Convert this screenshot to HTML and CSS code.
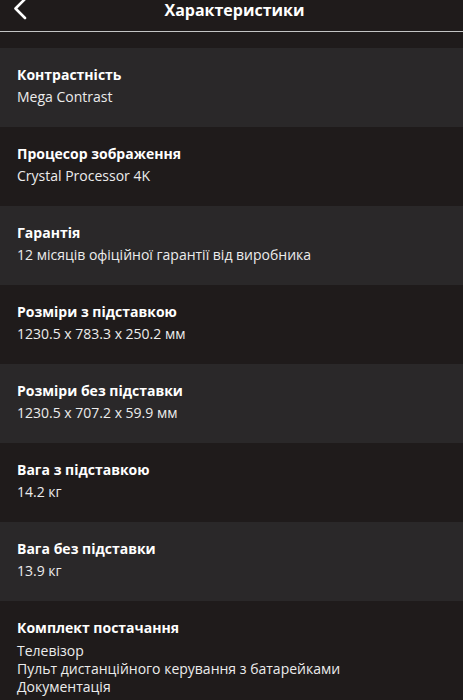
FILE: index.html
```html
<!DOCTYPE html>
<html lang="uk">
<head>
<meta charset="utf-8">
<title>Характеристики</title>
<link rel="stylesheet" href="styles.css">
</head>
<body>
<header class="topbar">
  <span class="back">
    <svg width="14" height="22" viewBox="0 0 14 22"><path d="M12 1 L2.5 10.5 L12 20" fill="none" stroke="#fff" stroke-width="2.6" stroke-linecap="round" stroke-linejoin="round"/></svg>
  </span>
  <h1 class="title">Характеристики</h1>
</header>
<div class="spacer"></div>
<main class="specs">
  <div class="row light"><div class="name">Контрастність</div><div class="value">Mega Contrast</div></div>
  <div class="row dark"><div class="name">Процесор зображення</div><div class="value">Crystal Processor 4K</div></div>
  <div class="row light"><div class="name">Гарантія</div><div class="value">12 місяців офіційної гарантії від виробника</div></div>
  <div class="row dark"><div class="name">Розміри з підставкою</div><div class="value">1230.5 x 783.3 x 250.2 мм</div></div>
  <div class="row light"><div class="name">Розміри без підставки</div><div class="value">1230.5 x 707.2 x 59.9 мм</div></div>
  <div class="row dark"><div class="name">Вага з підставкою</div><div class="value">14.2 кг</div></div>
  <div class="row light"><div class="name">Вага без підставки</div><div class="value">13.9 кг</div></div>
  <div class="row dark last"><div class="name">Комплект постачання</div>
    <div class="list">
      <div class="value item">Телевізор</div>
      <div class="value item">Пульт дистанційного керування з батарейками</div>
      <div class="value item">Документація</div>
    </div>
  </div>
</main>
</body>
</html>
```
FILE: styles.css
```css
html, body {
  margin: 0;
  padding: 0;
  background: #1f1b1b;
  font-family: "Open Sans", "Noto Sans", sans-serif;
  color: #fff;
}
.topbar {
  height: 31px;
  border-bottom: 1px solid #c4c4c4;
  display: flex;
  align-items: center;
  justify-content: center;
  position: relative;
  background: #1f1b1b;
}
.back {
  position: absolute;
  left: 13px;
  top: -2px;
  display: block;
}
.title {
  margin: 0;
  font-size: 16px;
  font-weight: 700;
  line-height: 20px;
  margin-top: -12px;
  margin-left: 6px;
}
.spacer {
  height: 16px;
}
.specs {
  display: flex;
  flex-direction: column;
}
.row {
  height: 79px;
  box-sizing: border-box;
  padding: 17px 17px 0;
  display: flex;
  flex-direction: column;
  gap: 2px;
}
.row.light { background: #2a2829; }
.row.dark { background: #1f1b1b; }
.row.last {
  height: auto;
  padding-bottom: 20px;
}
.name {
  font-size: 14px;
  font-weight: 700;
  line-height: 20px;
}
.value {
  font-size: 14px;
  line-height: 20px;
  color: #ececec;
}
.list {
  display: flex;
  flex-direction: column;
  margin-top: 2px;
}
.value.item {
  line-height: 18px;
}
```
